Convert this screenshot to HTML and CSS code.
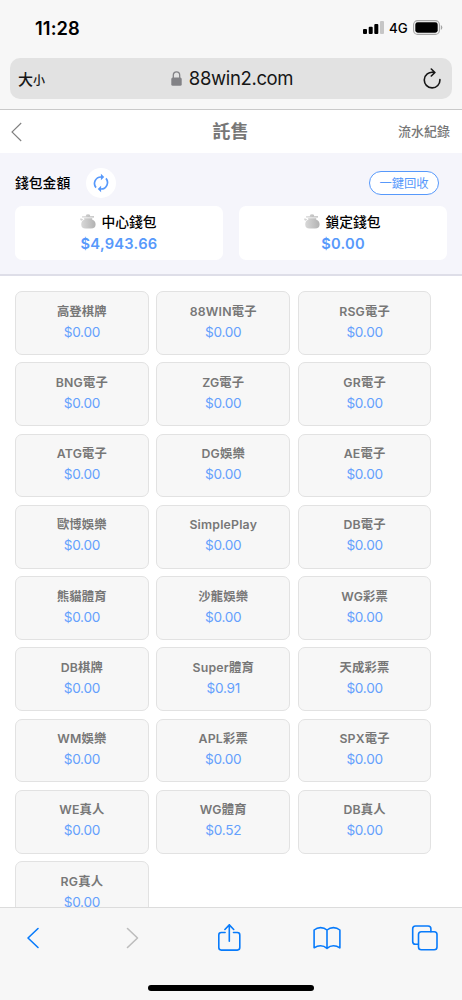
FILE: index.html
```html
<!DOCTYPE html>
<html lang="zh-Hant">
<head>
<meta charset="utf-8">
<meta name="viewport" content="width=device-width, initial-scale=1">
<title>託售</title>
<link rel="stylesheet" href="styles.css">
</head>
<body>
<div class="screen">
  <header class="browser">
    <div class="status">
      <span class="time">11:28</span>
      <div class="status-icons">
        <svg width="21" height="13" viewBox="0 0 21 13"><rect x="0" y="8" width="4" height="5" rx="1"/><rect x="5.7" y="5.7" width="4" height="7.3" rx="1"/><rect x="11.3" y="3" width="4" height="10" rx="1"/><rect x="17" y="0" width="4" height="13" rx="1" fill="#c6c6c6"/></svg>
        <span class="network">4G</span>
        <svg width="30" height="15" viewBox="0 0 30 15"><rect x=".6" y=".6" width="25.8" height="13.8" rx="4" fill="none" stroke="#a5a5a5" stroke-width="1.1"/><rect x="2.3" y="2.3" width="22.4" height="10.4" rx="2.4"/><path d="M27.8 5v5q1.5-.8 1.5-2.5T27.8 5Z" fill="#a5a5a5"/></svg>
      </div>
    </div>
    <div class="address">
      <span class="text-size">大<small>小</small></span>
      <span class="url"><svg width="11" height="15" viewBox="0 0 11 15"><path d="M2.3 7V4.2C2.3 2 3.6.8 5.5.8S8.7 2 8.7 4.2V7" fill="none" stroke="#828286" stroke-width="1.3"/><rect x=".3" y="6.5" width="10.4" height="8.3" rx="1.5" fill="#828286"/></svg>88win2.com</span>
      <svg class="reload" width="18" height="21" viewBox="0 0 18 21" fill="none" stroke="#161616" stroke-width="1.6" stroke-linecap="round" stroke-linejoin="round"><path d="M10.3 4.4A7.8 7.8 0 1 0 16.9 11.6M8.3 1l3.6 3.5L8.3 8"/></svg>
    </div>
  </header>

  <nav class="page-nav">
    <svg width="11" height="20" viewBox="0 0 11 20" fill="none" stroke="#808080" stroke-width="1.1"><path d="M10.2 1 1 10l9.2 9"/></svg>
    <h1>託售</h1>
    <span class="records">流水紀錄</span>
  </nav>

  <section class="wallet">
    <div class="wallet-head">
      <h2>錢包金額</h2>
      <span class="refresh"><svg width="16" height="20" viewBox="0 0 16 20"><g fill="none" stroke="#5799fb" stroke-width="1.7"><path d="M9.8 4H8A6.5 6.5 0 0 0 3 14.6"/><path d="M6.2 16H8A6.5 6.5 0 0 0 13 5.4"/></g><path d="M7.9 .8 11.2 4 7.9 7.2ZM8.1 12.8 4.8 16 8.1 19.2Z" fill="#5799fb"/></svg></span>
      <span class="collect">一鍵回收</span>
    </div>
    <svg class="defs" width="0" height="0"><defs>
      <linearGradient id="silver"><stop offset="0" stop-color="#d8d8d8"/><stop offset="1" stop-color="#b2b2b2"/></linearGradient>
      <symbol id="purse" viewBox="0 0 16 15"><path d="M5.8 1Q8-.5 10.2 1L9.8 2.2H14V3.4H2V2.2H6.2ZM3.7 4.2H12.5L11.8 5.3Q15.6 6.8 15.6 10.3 15.6 14.6 11 14.6H5.5Q1.2 14.6 1.2 10.3 1.2 7 4.6 5.3Z" fill="url(#silver)"/><path d="M.5 4.2 3.2 5.3 1.7 6.7.2 6Z" fill="#d3d3d3"/></symbol>
    </defs></svg>
    <div class="balances">
      <div class="balance"><div class="label"><svg width="16" height="15"><use href="#purse"/></svg>中心錢包</div><strong>$4,943.66</strong></div>
      <div class="balance"><div class="label"><svg width="16" height="15"><use href="#purse"/></svg>鎖定錢包</div><strong>$0.00</strong></div>
    </div>
  </section>

  <main class="games">
    <div class="card"><b>高登棋牌</b><span>$0.00</span></div>
    <div class="card"><b>88WIN電子</b><span>$0.00</span></div>
    <div class="card"><b>RSG電子</b><span>$0.00</span></div>
    <div class="card"><b>BNG電子</b><span>$0.00</span></div>
    <div class="card"><b>ZG電子</b><span>$0.00</span></div>
    <div class="card"><b>GR電子</b><span>$0.00</span></div>
    <div class="card"><b>ATG電子</b><span>$0.00</span></div>
    <div class="card"><b>DG娛樂</b><span>$0.00</span></div>
    <div class="card"><b>AE電子</b><span>$0.00</span></div>
    <div class="card"><b>歐博娛樂</b><span>$0.00</span></div>
    <div class="card"><b>SimplePlay</b><span>$0.00</span></div>
    <div class="card"><b>DB電子</b><span>$0.00</span></div>
    <div class="card"><b>熊貓體育</b><span>$0.00</span></div>
    <div class="card"><b>沙龍娛樂</b><span>$0.00</span></div>
    <div class="card"><b>WG彩票</b><span>$0.00</span></div>
    <div class="card"><b>DB棋牌</b><span>$0.00</span></div>
    <div class="card"><b>Super體育</b><span>$0.91</span></div>
    <div class="card"><b>天成彩票</b><span>$0.00</span></div>
    <div class="card"><b>WM娛樂</b><span>$0.00</span></div>
    <div class="card"><b>APL彩票</b><span>$0.00</span></div>
    <div class="card"><b>SPX電子</b><span>$0.00</span></div>
    <div class="card"><b>WE真人</b><span>$0.00</span></div>
    <div class="card"><b>WG體育</b><span>$0.52</span></div>
    <div class="card"><b>DB真人</b><span>$0.00</span></div>
    <div class="card"><b>RG真人</b><span>$0.00</span></div>
  </main>

  <footer class="toolbar">
    <div class="tools">
      <svg width="28" height="28" viewBox="-7.5 -3 28 28"><path d="M11.5 1.5 1.5 11l10 9.5" stroke-width="1.9"/></svg>
      <svg width="28" height="28" viewBox="-9 -3 28 28"><path class="disabled" d="m1.5 1.5 10 9.5-10 9.5" stroke-width="1.6"/></svg>
      <svg width="28" height="28" viewBox="-2.3 .7 28 28"><path d="M7.8 9.2H4Q1.5 9.2 1.5 11.7V24.3Q1.5 26.8 4 26.8H20Q22.5 26.8 22.5 24.3V11.7Q22.5 9.2 20 9.2H16.2M12 18V1.6M7.6 6.2 12 1.6l4.4 4.6"/></svg>
      <svg width="28" height="28" viewBox="0 -2 28 28"><path d="M14 4Q11.3 1.6 7.6 1.6T1.1 4V21.8Q4.2 19.7 7.6 19.7T14 22.3Q17 19.7 20.4 19.7T26.9 21.8V4Q24 1.6 20.4 1.6T14 4ZM14 4V22.3"/></svg>
      <svg width="28" height="28" viewBox="-.5 -1 28 28"><path d="M6.8 19.2H4Q1.2 19.2 1.2 16.4V3.8Q1.2 1 4 1H16.6Q19.4 1 19.4 3.8V6.7"/><rect x="7" y="6.8" width="18.5" height="18" rx="2.8"/></svg>
    </div>
    <div class="home-indicator"></div>
  </footer>
</div>
</body>
</html>
```

FILE: styles.css
```css
* { box-sizing: border-box; }
body {
  margin: 0;
  background: #fff;
  font-family: Inter, "Noto Sans CJK TC", sans-serif;
}
svg { display: block; flex: none; }
h1, h2 { margin: 0; }
.screen {
  width: 462px;
  height: 1000px;
  display: flex;
  flex-direction: column;
  overflow: hidden;
}
.browser {
  height: 110px;
  flex: none;
  background: #f7f7f7;
  border-bottom: 1px solid #c9c9c9;
}
.status {
  height: 58px;
  display: flex;
  justify-content: space-between;
  align-items: center;
  padding: 0 19px 3px 35px;
}
.time { font-size: 18.3px; font-weight: 600; letter-spacing: .1px; }
.status-icons { display: flex; align-items: center; gap: 5px; }
.network { font-size: 13.3px; font-weight: 450; width: 18px; margin-right: 1px; }
.address {
  height: 41px;
  margin: 0 10px;
  padding: 0 11px 0 8px;
  border-radius: 10px;
  background: #e2e2e2;
  display: flex;
  align-items: center;
  justify-content: space-between;
  color: #161616;
}
.text-size { width: 26px; font-size: 15px; font-weight: 500; white-space: nowrap; }
.text-size small { font-size: 12px; }
.url { display: flex; align-items: center; gap: 7px; padding: 0 3px 1px 0; font-size: 18.5px; letter-spacing: -.35px; }
.page-nav {
  height: 43px;
  flex: none;
  display: grid;
  grid-template-columns: 1fr auto 1fr;
  align-items: center;
  padding: 0 12px 0 11px;
  color: #777;
}
.page-nav h1 { font-size: 18px; font-weight: 600; line-height: 24px; }
.records { justify-self: end; font-size: 13px; font-weight: 500; line-height: 20px; padding-bottom: 1px; }
.wallet {
  height: 123px;
  flex: none;
  background: #f5f5fb;
  border-bottom: 2px solid #dedee8;
  padding: 15px 15px 0;
}
.wallet-head { display: flex; align-items: center; height: 30px; margin-bottom: 8px; }
.wallet-head h2 { width: 71px; font-size: 13.8px; font-weight: 500; white-space: nowrap; padding-bottom: 2px; }
.refresh {
  width: 30px;
  height: 30px;
  border-radius: 50%;
  background: #fff;
  display: flex;
  align-items: center;
  justify-content: center;
}
.collect {
  width: 70px;
  height: 24px;
  margin: 0 8px 0 auto;
  border: 1px solid #5799fb;
  border-radius: 12px;
  background: #fff;
  color: #5799fb;
  font-size: 12.3px;
  line-height: 23px;
  text-align: center;
}
.defs { position: absolute; }
.balances { display: grid; grid-template-columns: 1fr 1fr; gap: 16px; }
.balance { height: 54px; border-radius: 7px; background: #fff; text-align: center; padding-top: 6px; }
.label { display: flex; justify-content: center; gap: 5px; padding-right: 1px; font-size: 13.8px; line-height: 20px; font-weight: 500; }
.label svg { margin-top: 2px; }
.balance strong { display: block; font-size: 14.7px; line-height: 24px; font-weight: 600; letter-spacing: .25px; color: #5799fb; }
.games {
  flex: 1;
  min-height: 0;
  overflow: hidden;
  padding: 15px 30.5px 0 15px;
  display: grid;
  grid-template-columns: repeat(3, 1fr);
  grid-auto-rows: 63.7px;
  align-content: start;
  gap: 7.6px;
}
.card {
  border: 1px solid #e2e2e2;
  border-radius: 7px;
  background: #f7f7f7;
  padding-top: 8.5px;
  text-align: center;
}
.card b, .card span { display: block; line-height: 21px; }
.card b { color: #777; font-size: 12.3px; font-weight: 600; letter-spacing: .2px; }
.card span { color: #64a0fd; font-size: 13.6px; letter-spacing: -.25px; }
.toolbar {
  height: 93px;
  flex: none;
  background: #f7f7f7;
  border-top: 1px solid #dcdcdc;
  display: flex;
  flex-direction: column;
  justify-content: space-between;
  align-items: center;
  padding-bottom: 9px;
}
.tools {
  width: 100%;
  height: 59px;
  display: flex;
  justify-content: space-between;
  align-items: center;
  padding: 0 23.5px 0 18.5px;
}
.tools path, .tools rect { fill: none; stroke: #087bfb; stroke-width: 1.6; stroke-linecap: round; stroke-linejoin: round; }
.tools .disabled { stroke: #bdbdbd; }
.home-indicator { width: 166px; height: 6px; border-radius: 3px; background: #000; }
```
